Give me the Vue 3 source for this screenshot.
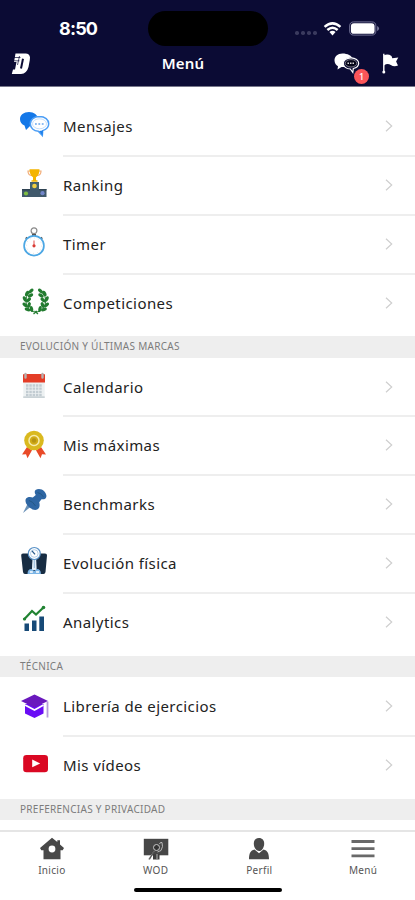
<script setup>
const groups = [
  { title: '', items: [
    { icon: 'chat', label: 'Mensajes' },
    { icon: 'podium', label: 'Ranking' },
    { icon: 'timer', label: 'Timer' },
    { icon: 'laurel', label: 'Competiciones' }
  ] },
  { title: 'EVOLUCIÓN Y ÚLTIMAS MARCAS', items: [
    { icon: 'calendar', label: 'Calendario' },
    { icon: 'medal', label: 'Mis máximas' },
    { icon: 'pin', label: 'Benchmarks' },
    { icon: 'scale', label: 'Evolución física' },
    { icon: 'chart', label: 'Analytics' }
  ] },
  { title: 'TÉCNICA', items: [
    { icon: 'cap', label: 'Librería de ejercicios' },
    { icon: 'video', label: 'Mis vídeos' }
  ] },
  { title: 'PREFERENCIAS Y PRIVACIDAD', items: [] }
]
const leaves = [
  [12, 4, -50], [8, 6.5, -25], [11.5, 8.5, -60], [5.8, 12, 25], [9.5, 13, -50],
  [6, 18, 50], [10, 18, -20], [8.5, 22.5, 70], [12.5, 22, 10]
]
const tabs = [
  { icon: 'home', label: 'Inicio' },
  { icon: 'board', label: 'WOD' },
  { icon: 'user', label: 'Perfil' },
  { icon: 'menu', label: 'Menú' }
]
</script>

<template>
  <div class="screen">
    <header class="header">
      <div class="status">
        <span class="time">8:50</span>
        <span class="island"></span>
        <div class="signals">
          <span class="dots"><i v-for="n in 4" :key="n"></i></span>
          <svg class="wifi" viewBox="0 0 20 15">
            <path d="M1.500 5.200Q10-2.200 18.500 5.200M4.500 8.500Q10 3.700 15.500 8.500" fill="none" stroke="#fff" stroke-width="2.700" />
            <path d="M6.700 10.800Q10 7.900 13.300 10.800L10 14.500z" fill="#fff" />
          </svg>
          <svg class="battery" viewBox="0 0 32 15">
            <rect x=".7" y=".7" width="27" height="13.600" rx="4.200" fill="none" stroke="#77779a" />
            <rect x="2" y="2" width="24.400" height="11" rx="3" fill="#fff" />
            <path d="M29 5q2 .7 2 2.500T29 10z" fill="#77779a" />
          </svg>
        </div>
      </div>
      <div class="bar">
        <svg class="logo" viewBox="0 0 20 22">
          <path d="M4.500.5H15Q20 1 18.800 7L17.500 14Q15.800 20.500 10 21H.8L2 16.500H4L5.500 9H3z" fill="#fff" />
          <path d="M12 5.800L10 15.500" stroke="#0b0b34" stroke-width="2" />
          <path d="M3 4.500H9.500M3 7.800H8.500M8.500 3L6.500 12" stroke="#0b0b34" stroke-width=".7" />
        </svg>
        <h1>Menú</h1>
        <div class="actions">
          <span class="messages">
            <svg viewBox="0 0 26 22">
              <path d="M8.500.5C3.500.5.5 3.500.5 7.500c0 2.500 1.500 4.700 3.500 5.700l-.5 3.300 4-2.500h4l8-7.500C17.500 2.500 13.500.5 8.500.5z" fill="#fff" />
              <path d="M17 4.800c-4.600 0-7.700 2.500-7.700 5.500 0 3.200 3 5.700 7 5.700l2.500 3.500.5-4c3.400-.8 5.400-2.700 5.400-5.200 0-3-3.200-5.500-7.700-5.500z" fill="#0b0b34" stroke="#fff" stroke-width="1.200" />
              <ellipse cx="17" cy="10.300" rx="5.800" ry="3.700" fill="#050519" stroke="#bbb" stroke-width=".6" />
              <path d="M13.500 10.300h7" stroke="#ddd" stroke-width="1.400" stroke-dasharray="1.500 1" />
            </svg>
            <b>1</b>
          </span>
          <svg class="flag" viewBox="0 0 17 21">
            <path d="M1.800.8V20" stroke="#fff" stroke-width="1.400" /><circle cx="1.800" cy="19" r="1.500" fill="#fff" />
            <path d="M2 2.200q4-1.500 7.500.8l.8 2.200 6-.8-2.200 4 1.900 4.200q-4 1.700-7.200-.5Q5.500 9.800 2 12.500z" fill="#fff" />
          </svg>
        </div>
      </div>
    </header>

    <main class="list">
      <section v-for="g in groups" :key="g.title" class="group">
        <h2 v-if="g.title">{{ g.title }}</h2>
        <div v-for="item in g.items" :key="item.label" class="row">
          <svg class="icon" viewBox="0 0 32 32">
            <g v-if="item.icon === 'chat'">
              <path d="M10 2C4.800 2 1 5 1 9.200c0 2.700 1.700 5 4.500 6.300L7 20l3.500-3.500L20 10C18.500 4.800 15 2 10 2z" fill="#1478e8" />
              <path d="M20.500 6.500c-5.600 0-9.200 3.100-9.200 7.300s3.400 7.200 8 7.500l4 4.200.4-4.900c3.600-1 6-3.600 6-6.800 0-4.200-3.700-7.300-9.200-7.300z" fill="#fff" stroke="#4c9ef5" stroke-width="1.500" />
              <path d="M20 21l3.500 4.500.4-5z" fill="#1d80ec" />
              <ellipse cx="20.500" cy="13.800" rx="7" ry="5" fill="#fff" stroke="#a9d0fb" stroke-width=".7" />
              <path d="M16 14h9" stroke="#8dbcf2" stroke-width="1.800" stroke-dasharray="1.800 1.600" />
            </g>
            <g v-else-if="item.icon === 'podium'">
              <path d="M11 2H9q0 4.500 4 4.500M20 2h2q0 4.500-4 4.500" fill="none" stroke="#f2ad78" stroke-width="1.200" />
              <path d="M10.500.3h10q0 6-3.500 8v3h1.500v1.500h-6v-1.500H14v-3Q10.500 6 10.500.3z" fill="#f4b400" />
              <path d="M11 13h9v15h-9z" fill="#44616e" /><path d="M3 20h24.500v8H3z" fill="#40596b" />
              <path d="M3 20h8v1.500H3zM20 20h7.500v1.200H20z" fill="#2f4353" />
              <circle cx="15.500" cy="17" r="2.300" fill="#f0cf42" /><circle cx="7" cy="24.500" r="2.100" fill="#7ebd42" /><circle cx="23.500" cy="24.200" r="2.100" fill="#7286ca" />
            </g>
            <g v-else-if="item.icon === 'timer'">
              <circle cx="15" cy="2.800" r="2.900" fill="#fff" stroke="#8a8a8a" stroke-width="1.200" />
              <path d="M13 6h4v2.500h-4z" fill="#555" /><path d="M6.800 9.500l2 2M23.200 9.500l-2 2" stroke="#555" stroke-width="1.800" />
              <circle cx="15" cy="17.700" r="9.900" fill="#fff" stroke="#4ca7e4" stroke-width="1.700" />
              <circle cx="15" cy="17.700" r="7.700" fill="none" stroke="#d9d9d9" stroke-width=".8" stroke-dasharray="1 3" />
              <path d="M15 12.500v4.500" stroke="#e5605c" stroke-width="1.100" /><circle cx="15" cy="17.800" r="1.600" fill="#d83b35" />
            </g>
            <g v-else-if="item.icon === 'laurel'">
              <g v-for="side in [1, -1]" :key="side" :transform="side === 1 ? '' : 'translate(33.500 0) scale(-1 1)'">
                <path d="M13.500 3Q4.500 9 7.500 18 10 24 15.500 25" fill="none" stroke="#2d7d37" stroke-width="1" />
                <ellipse v-for="(l, i) in leaves" :key="i" rx="1.700" ry="3" fill="#237c30" :transform="`translate(${l[0]} ${l[1]}) rotate(${-l[2]})`" />
                <path d="M18 24l-3.500 3" stroke="#237c30" stroke-width="1.200" />
              </g>
            </g>
            <g v-else-if="item.icon === 'calendar'">
              <path d="M4.300 8h21.400v19H4.300z" fill="#edf1f2" /><path d="M4.300 25.300h21.400V27H4.300z" fill="#c9d2d6" />
              <path d="M4 4q0-1 1-1h20q1 0 1 1v7.500H4z" fill="#e43d27" />
              <path d="M6.500 3v3.500M23.500 3v3.500" stroke="#b9b0ae" stroke-width="2.400" stroke-linecap="round" />
              <path d="M7 14.500h16M7 17.700h16M7 20.900h16M7 24h16" stroke="#c2ccd2" stroke-width="2.300" stroke-dasharray="2.500 .8" />
            </g>
            <g v-else-if="item.icon === 'medal'">
              <path d="M8 17l-5 7.500 4-.2 1.500 4 4.500-8zM22 17l5 7.500-4-.2-1.500 4-4.500-8z" fill="#e94a28" />
              <circle cx="15" cy="10.500" r="9.800" fill="#dab91f" /><circle cx="15" cy="10.500" r="5" fill="#d0ab17" stroke="#f7ecac" stroke-width="1.500" />
              <circle cx="15" cy="10.500" r="2.200" fill="#b69312" />
            </g>
            <g v-else-if="item.icon === 'pin'">
              <path d="M9 14L4 24l8-6.500z" fill="#6991b8" />
              <path d="M16.500 1C19-.8 23-.2 25.200 2.200 27.500 4.500 28.200 8 26.500 9.500c-1.300 1-3 .9-4 .7l-2.300 3c1 3.200.3 6-2 7.300-2.700 1.300-6.500-.5-9-3.200C6.500 14.700 5.700 11 7.300 9.200c1.700-1.600 4.300-1.500 6.500-.8l3-2.400C15.500 4 15.300 2.200 16.500 1z" fill="#2e66a3" />
              <path d="M18.500 3.500q4 .8 6 4.500M10 11.500q4 1 6.500 5.500" fill="none" stroke="#245886" stroke-width="1" />
            </g>
            <g v-else-if="item.icon === 'scale'">
              <path d="M4 5.500h6l5 6 5-6h6q2.200 0 2 2l-1.500 16.500q-.3 2-2 2H6q-1.700 0-2-2L2.200 7.500q-.2-2 1.800-2z" fill="#172c42" />
              <path d="M13.500 10h3.600l.6 12h-4.800z" fill="#e3eff9" /><path d="M15.300 11v9" stroke="#85aed2" stroke-width=".8" />
              <circle cx="15.300" cy="5.500" r="6" fill="#fff" stroke="#5a92c7" stroke-width="1.200" />
              <circle cx="15.300" cy="5.500" r="3.800" fill="none" stroke="#9fc0de" stroke-width=".8" /><path d="M13 2.800l3 3.500" stroke="#285b8c" stroke-width="1.300" />
              <path d="M8.500 26q0-5 4-5l2.700 2 2.700-2q4 0 4 5z" fill="#7cb5e6" /><path d="M10.800 24h3M17 24h3" stroke="#fff" stroke-width="1.500" />
            </g>
            <g v-else-if="item.icon === 'chart'">
              <path d="M5.500 17.500H10V25H5.500zM13 14.500h4.500V25H13zM20.300 10.500H25V25h-4.700z" fill="#174a77" />
              <path d="M5 13.500l8-8.500 4 3.500L24.500 1.500" fill="none" stroke="#218332" stroke-width="2.200" /><circle cx="5.500" cy="13" r="1.600" fill="#218332" /><circle cx="24.500" cy="1.500" r="1.800" fill="#218332" />
            </g>
            <g v-else-if="item.icon === 'cap'">
              <path d="M6 14h18.500v9.500L15.500 28 6 23.500z" fill="#6a0cf5" />
              <path d="M6 15l9.500 5 9-5" fill="none" stroke="#fff" stroke-width="1.800" />
              <path d="M15.500 4.500L29 11l-13.500 6.500L2 11z" fill="#6a18bd" />
              <path d="M28.500 11.500v16" stroke="#b69adb" stroke-width="1.800" />
            </g>
            <g v-else>
              <rect x="4.200" y="6" width="24.800" height="17.200" rx="3.300" fill="#da0823" /><path d="M13.200 10.500v7.800l8-3.900z" fill="#fff" />
            </g>
          </svg>
          <div class="cell">
            <span>{{ item.label }}</span>
            <svg class="chevron" viewBox="0 0 8 12"><path d="M1 .7L6.700 6 1 11.300" fill="none" stroke="#cfcfcf" stroke-width="1.200" /></svg>
          </div>
        </div>
      </section>
    </main>

    <nav class="tabs">
      <div v-for="tab in tabs" :key="tab.label" class="tab">
        <svg viewBox="0 0 26 24">
          <g v-if="tab.icon === 'home'" fill="#484848">
            <path d="M13 .8L18.300 5V3.200H21v4.200L25 11l-1.300 2.200H21.500v9h-17v-9H2.300L1 11z" /><circle cx="13" cy="12" r="3.400" fill="#fff" />
          </g>
          <g v-else-if="tab.icon === 'board'">
            <path d="M.8 1.800h24.500v16.500H.8z" fill="#464646" /><path d="M10 17h6.500v5.500H10z" fill="#3d3d3d" />
            <circle cx="13.500" cy="10.500" r="3" fill="#333" stroke="#c8c8c8" stroke-width="1" />
            <path d="M16.500 7q.5-2 2.500-1.500 1.500 4-1 8l-3.500 1.500M11 14.500L5.500 22M14 17v5" fill="none" stroke="#c4c4c4" stroke-width=".9" />
            <path d="M11.500 15L7 22.500H5.500L10 15z" fill="#555" />
          </g>
          <g v-else-if="tab.icon === 'user'" fill="#484848">
            <path d="M13 1c3.300 0 5.200 2.300 5.200 5.700S16 14 13 14s-5.200-3.900-5.200-7.300S9.700 1 13 1z" /><path d="M8.500 12.500l4.500 3.700 4.500-3.700c4 .7 5.500 4 5.500 9.800H3c0-5.800 1.500-9.100 5.500-9.800z" />
          </g>
          <path v-else d="M1.500 4.500h23M1.500 11.700h23M1.500 18.900h23" stroke="#696969" stroke-width="2.800" />
        </svg>
        <span>{{ tab.label }}</span>
      </div>
    </nav>
    <div class="home-area"><span></span></div>
  </div>
</template>

<style>
body { background: #fff; }
</style>

<style scoped>
* { box-sizing: border-box; }
.screen { width: 415px; height: 900px; display: flex; flex-direction: column; overflow: hidden; background: #fff; font-family: "Noto Sans", sans-serif; color: #222; }
svg { display: block; flex: none; }
.header { height: 87px; flex: none; background: #0b0b34; border-bottom: 1px solid #77778a; color: #fff; }
.status { height: 46px; padding-top: 11px; display: grid; grid-template-columns: 148px 120px 1fr; }
.time { padding: 6px 0 0 59px; font: 700 18px/24px Inter, sans-serif; letter-spacing: -.8px; }
.island { height: 35px; border-radius: 18px; background: #000; }
.signals { display: flex; align-items: center; padding-left: 27px; }
.dots { display: flex; gap: 2.500px; margin: 9px 6px 0 0; }
.dots i { width: 3.500px; height: 3.500px; border-radius: 50%; background: #3a3a5e; }
.wifi { width: 19px; height: 14px; }
.battery { width: 31px; height: 15px; margin-left: 7px; }
.bar { height: 40px; display: grid; grid-template-columns: 142px 60px 1fr; padding: 0 16px 0 11px; }
.logo { width: 20px; height: 22px; margin-top: 7px; }
.bar h1 { margin: 5px 0 0; font-size: 15px; line-height: 24px; font-weight: 600; text-align: center; letter-spacing: .2px; }
.actions { display: flex; justify-content: flex-end; gap: 22px; padding-top: 7px; }
.messages { position: relative; width: 26px; height: 22px; }
.messages svg { width: 26px; height: 22px; }
.messages b { position: absolute; left: 20px; top: 15.500px; width: 15px; height: 15px; border-radius: 50%; background: #fb5559; font: 500 9px/15px "Noto Sans", sans-serif; text-align: center; }
.flag { width: 17px; height: 21px; }
.list { height: 743px; flex: none; padding-top: 10px; overflow: hidden; }
.group { padding-bottom: 3.600px; }
.group h2 { height: 21.400px; margin: 0; padding-left: 20px; background: #eee; color: #7c7c7c; font-size: 10px; line-height: 21px; font-weight: 400; letter-spacing: .28px; }
.row { height: 58.950px; display: flex; align-items: center; padding-left: 19px; }
.icon { width: 32px; height: 32px; margin: 0 12px 1px 0; overflow: visible; }
.cell { height: calc(100% + .7px); align-self: flex-start; flex: 1; display: flex; align-items: center; justify-content: space-between; padding-right: 22px; border-bottom: 2px solid #eee; font-size: 15px; letter-spacing: .42px; }
.row:last-child .cell { border-color: transparent; }
.chevron { width: 8px; height: 12px; }
.tabs { height: 54px; flex: none; border-top: 2px solid #e5e5e5; display: grid; grid-template-columns: repeat(4, 1fr); }
.tab { display: flex; flex-direction: column; align-items: center; padding-top: 5px; font-size: 10px; line-height: 14px; letter-spacing: .3px; color: #555; }
.tab svg { width: 26px; height: 24px; }
.tab span { margin-top: 2px; }
.home-area { display: flex; justify-content: center; padding-top: 4px; }
.home-area span { width: 148px; height: 4px; border-radius: 2px; background: #000; }
</style>
